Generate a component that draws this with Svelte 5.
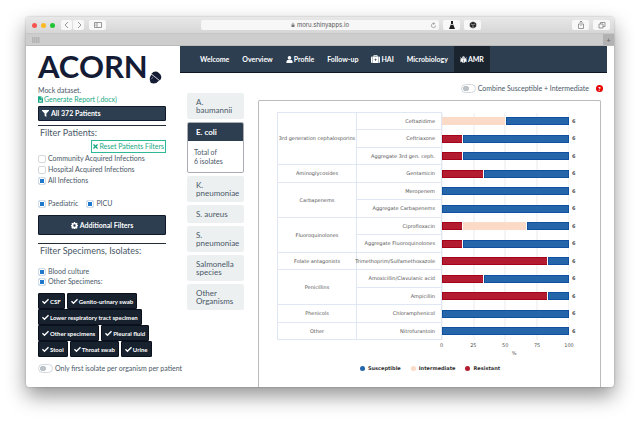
<script>
  const nav = [
    { label: 'Welcome' },
    { label: 'Overview' },
    { label: 'Profile', icon: 'user' },
    { label: 'Follow-up' },
    { label: 'HAI', icon: 'case' },
    { label: 'Microbiology' },
    { label: 'AMR', icon: 'bug', active: true }
  ];

  const icons = {
    user: { box: '0 0 16 16', d: 'M8 0a4 4 0 0 1 4 4.500a4 4 0 0 1-8 0A4 4 0 0 1 8 0zM1 16v-3c0-2.500 2-4 4-4h6c2 0 4 1.500 4 4v3z' },
    case: { box: '0 0 18 16', d: 'M5 3V1.500Q5 0 6.500 0h5Q13 0 13 1.500V3h-1.500V1.500h-5V3zM0 5q0-2 2-2h1v13H2q-2 0-2-2zM3.700 3h10.600v13H3.700zM8.400 7v2H6.500v1.200h1.900v2h1.200v-2h1.900V9H9.600V7zM15 3h1q2 0 2 2v9q0 2-2 2h-1z' },
    bug: { box: '0 0 16 16', d: 'M4.500 4a3.500 3.500 0 0 1 7 0zM3 5h10l2-2 1 1-2.500 2.500V8H16v2h-2.500v1l2.500 2.500-1 1-2.500-2Q11 15.500 8.500 16V8h-1v8Q5 15.500 3.500 12.500l-2.500 2-1-1L2.500 11v-1H0V8h2.500V6.500L0 4l1-1z' },
    file: { box: '0 0 12 16', d: 'M0 0h7v5h5v11H0zM8 0l4 4H8zM3 8v5h6V8H8v3L6 9l-2 2V8z' },
    filter: { box: '0 0 16 16', d: 'M0 0h16v1.500L10 8v8l-4-3V8L0 1.500z' },
    times: { box: '0 0 16 16', d: 'M3 0l5 5 5-5 3 3-5 5 5 5-3 3-5-5-5 5-3-3 5-5-5-5z' },
    check: { box: '0 0 16 16', d: 'M0 8.500L2.200 6.300 5.600 9.700 13.800 1.800 16 4 5.600 14z' },
    cog: { box: '0 0 16 16', d: 'M6.500 0h3l.4 2.200 1.300.600 2-1.200 2 2.200-1.100 1.900.5 1.200L16 7.400v2l-1.600.7-.5 1.200 1.100 2-2 2-2-1.100-1.200.5L9.500 16h-3l-.5-1.400-1.300-.5-2 1.200-2-2.100 1.100-1.900-.4-1.200L0 9.400v-2L1.500 7 2 5.700.8 3.800l2-2.200 2 1.200L6.100 2.200zM8 5.200a2.800 2.800 0 1 0 0 5.600a2.800 2.800 0 1 0 0-5.600z' }
  };

  const organisms = ['K. pneumoniae', 'S. aureus', 'S. pneumoniae', 'Salmonella species', 'Other Organisms'];
  const specimens = [
    ['CSF', 'Genito-urinary swab'],
    ['Lower respiratory tract specimen'],
    ['Other specimens', 'Pleural fluid'],
    ['Stool', 'Throat swab', 'Urine']
  ];

  // resistant and intermediate isolates out of the total of six
  const groups = [
    { name: '3rd generation cephalosporins', drugs: [['Ceftazidime', 0, 3], ['Ceftriaxone', 1, 0], ['Aggregate 3rd gen. ceph.', 1, 0]] },
    { name: 'Aminoglycosides', drugs: [['Gentamicin', 2, 0]] },
    { name: 'Carbapenems', drugs: [['Meropenem', 0, 0], ['Aggregate Carbapenems', 0, 0]] },
    { name: 'Fluoroquinolones', drugs: [['Ciprofloxacin', 1, 3], ['Aggregate Fluoroquinolones', 1, 0]] },
    { name: 'Folate antagonists', drugs: [['Trimethoprim/Sulfamethoxazole', 5, 0]] },
    { name: 'Penicillins', drugs: [['Amoxicillin/Clavulanic acid', 2, 0], ['Ampicillin', 5, 0]] },
    { name: 'Phenicols', drugs: [['Chloramphenicol', 0, 0]] },
    { name: 'Other', drugs: [['Nitrofurantoin', 0, 0]] }
  ];
  const total = 6;
  const rows = groups.flatMap((g) =>
    g.drugs.map(([drug, r, i], n) => ({
      drug,
      group: n === 0 ? g.name : null,
      span: g.drugs.length,
      parts: [['res', r], ['int', i], ['sus', total - r - i]].filter((p) => p[1] > 0)
    }))
  );
</script>

{#snippet icon(name)}
  <svg class="icon {name}" viewBox={icons[name].box} aria-hidden="true"><path d={icons[name].d} fill="currentColor" fill-rule="evenodd" /></svg>
{/snippet}

<div class="desktop">
<div class="window">
  <header class="toolbar">
    <div class="left">
      <i class="dot red"></i><i class="dot amber"></i><i class="dot green"></i>
      <div class="pair">
        <button class="tool" aria-label="Back"><svg viewBox="0 0 12 10"><path d="M7 2L4 5l3 3" /></svg></button>
        <button class="tool" aria-label="Forward"><svg viewBox="0 0 12 10"><path d="M5 2l3 3-3 3" /></svg></button>
      </div>
      <button class="tool wide" aria-label="Sidebar"><svg viewBox="0 0 12 10"><path d="M2.500 2.500h7v5h-7zM5 2.500v5M3.500 4h.7M3.500 5.500h.7" /></svg></button>
    </div>
    <div class="address">
      <svg class="lock" viewBox="0 0 8 10"><path d="M1 4h6v5H1z" fill="#777" /><path d="M2.500 4V2.500a1.500 1.500 0 0 1 3 0V4" fill="none" stroke="#777" /></svg>
      <span>moru.shinyapps.io</span>
      <svg class="reload" viewBox="0 0 10 10"><path d="M8 5a3 3 0 1 1-2-2.800M4.500.7L6.700 2.300 4.700 4" fill="none" stroke="#777" stroke-width=".8" /></svg>
    </div>
    <div class="right">
      <button class="tool wide" aria-label="Flask"><svg viewBox="0 0 12 10"><path d="M5 1h2v3l2 5H3l2-5z" fill="#222" stroke="none" /><path d="M5 4.500h2" stroke="#eee" /></svg></button>
      <button class="tool wide" aria-label="Extension"><svg viewBox="0 0 12 10"><path d="M6 2l2.800 1.400v3.200L6 8 3.200 6.600V3.400z" fill="#222" stroke="#222" /><path d="M6 5.500V8M4 4l2 1 2-1" stroke="#eee" stroke-width=".6" /></svg></button>
      <span class="push"></span>
      <button class="tool wide" aria-label="Share"><svg viewBox="0 0 12 10"><path d="M5 4H3.500v4.500h5V4H7M6 6V1M4.500 2.500L6 1l1.500 1.500" /></svg></button>
      <button class="tool wide" aria-label="Tabs"><svg viewBox="0 0 12 10"><path d="M3 4h4v4H3zM4.500 4V2.500h4.500v4H7" /></svg></button>
    </div>
  </header>
  <div class="tabs">
    <svg class="grid" viewBox="0 0 8 6"><path d="M0 1h8M0 3h8M0 5h8" stroke="#999" stroke-dasharray="1.500 .5" /></svg>
    <button class="plus" aria-label="New tab">+</button>
  </div>

  <div class="page">
    <aside>
      <h1>ACORN<svg class="acorn" viewBox="0 0 26 24"><g transform="rotate(38 13 12)"><path d="M3 10Q3 0 13 0t10 10z" fill="#141c35" /><path d="M4 11h18q0 10-9 13q-9-3-9-13z" fill="#141c35" /><path d="M3 10.500h20M9 13v5" stroke="#b4bac8" stroke-width="1" fill="none" /></g></svg></h1>
      <p>Mock dataset.</p>
      <a class="report" href="#report">{@render icon('file')} Generate Report (.docx)</a>
      <button class="dark patients">{@render icon('filter')} All 372 Patients</button>
      <section class="filters">
        <h2>Filter Patients:</h2>
        <button class="reset">{@render icon('times')} Reset Patients Filters</button>
        <div class="checks">
          <label><input type="checkbox" />Community Acquired Infections</label>
          <label><input type="checkbox" />Hospital Acquired Infections</label>
          <label><input type="checkbox" checked />All Infections</label>
        </div>
        <div class="wards">
          <label><input type="checkbox" checked />Paediatric</label>
          <label><input type="checkbox" checked />PICU</label>
        </div>
        <button class="dark more">{@render icon('cog')} Additional Filters</button>
      </section>
      <section class="filters">
        <h2>Filter Specimens, Isolates:</h2>
        <div class="cultures">
          <label><input type="checkbox" checked />Blood culture</label>
          <label><input type="checkbox" checked />Other Specimens:</label>
        </div>
        <div class="tags">
          {#each specimens as line}
            <div>
              {#each line as s}<button>{@render icon('check')} {s}</button>{/each}
            </div>
          {/each}
        </div>
        <label class="switch"><input type="checkbox" role="switch" />Only first isolate per organism per patient</label>
      </section>
    </aside>

    <main>
      <nav>
        {#each nav as item}
          <a href="#{item.label}" class:active={item.active}>{#if item.icon}{@render icon(item.icon)}{/if}{item.label}</a>
        {/each}
      </nav>
      <div class="combine">
        <label class="switch"><input type="checkbox" role="switch" />Combine Susceptible + Intermediate</label>
        <button class="help" aria-label="Help">?</button>
      </div>
      <div class="body">
        <div class="organisms">
          <button>A. baumannii</button>
          <div class="selected">
            <button>E. coli</button>
            <p>Total of<br />6 isolates</p>
          </div>
          {#each organisms as o}<button>{o}</button>{/each}
        </div>
        <div class="card">
          <table>
            <colgroup><col class="c-group" /><col class="c-drug" /><col /><col class="c-count" /></colgroup>
            <tbody>
              {#each rows as row}
                <tr>
                  {#if row.group}<th rowspan={row.span} scope="rowgroup">{row.group}</th>{/if}
                  <th class="drug" scope="row"><span>{row.drug}</span></th>
                  <td class="plot">
                    <div class="bar">
                      {#each row.parts as [kind, n]}<i class={kind} style="width: {(n / total) * 100}%"></i>{/each}
                    </div>
                  </td>
                  <td class="count">{total}</td>
                </tr>
              {/each}
            </tbody>
            <tfoot>
              <tr>
                <td colspan="2"></td>
                <td>
                  <div class="axis">{#each [0, 25, 50, 75, 100] as t}<span>{t}</span>{/each}</div>
                </td>
                <td></td>
              </tr>
              <tr>
                <td colspan="2"></td>
                <td colspan="2" class="unit">%</td>
              </tr>
            </tfoot>
          </table>
          <div class="legend">
            <span><i class="sus"></i>Susceptible</span>
            <span><i class="int"></i>Intermediate</span>
            <span><i class="res"></i>Resistant</span>
          </div>
        </div>
      </div>
    </main>
  </div>
</div>
</div>

<style>
  :global(body) { background: #fff; }
  * { box-sizing: border-box; }
  .desktop { padding: 17px 26px 34px; overflow: hidden; }
  .window {
    border-radius: 3px;
    background: #fff;
    font: 7px/9px Lato, "Liberation Sans", sans-serif;
    color: #4a5868;
    box-shadow: 0 9px 20px rgba(0, 0, 0, .42), 0 0 2px rgba(0, 0, 0, .3);
  }
  h1, h2, p { margin: 0; font-weight: 400; }
  button { font: inherit; color: inherit; border: 0; padding: 0; margin: 0; }
  a { color: inherit; text-decoration: none; }
  .icon { width: 7px; height: 7px; flex: none; }

  .toolbar {
    display: grid;
    grid-template-columns: 1fr 238px 1fr;
    align-items: center;
    height: 17px;
    background: linear-gradient(#e8e8e8, #d6d6d6);
    border-bottom: 1px solid #c6c6c6;
    border-radius: 3px 3px 0 0;
  }
  .left, .right { display: flex; align-items: center; gap: 4px; padding: 0 4px; }
  .left { padding-left: 6px; }
  .dot { width: 5px; height: 5px; border-radius: 50%; }
  .red { background: #f95550; }
  .amber { background: #fdb924; }
  .green { background: #1fc534; }
  .pair { display: flex; gap: 1px; margin: 0 1px 0 2px; }
  .tool { width: 11px; height: 10px; background: #f8f8f8; border-radius: 2px; display: flex; justify-content: center; }
  .tool.wide { width: 17px; }
  .tool svg { width: 12px; height: 10px; fill: none; stroke: #808080; stroke-width: .8; flex: none; }
  .address {
    display: flex; align-items: center; justify-content: center; gap: 2px;
    height: 10px; background: #f7f7f7; border-radius: 2px;
    font: 6px/10px Inter, sans-serif; color: #555; position: relative;
  }
  .lock { width: 4px; height: 6px; }
  .reload { position: absolute; right: 2px; width: 7px; height: 7px; }
  .push { flex: 1; }
  .tabs { display: flex; align-items: center; justify-content: space-between; height: 12px; background: #cdcdcd; border-bottom: 1px solid #bbb; padding-left: 6px; }
  .grid { width: 8px; height: 6px; }
  .plus { width: 11px; height: 11px; background: #b2b2b2; color: #666; font-size: 8px; line-height: 10px; }

  .page { display: grid; grid-template-columns: 154px minmax(0, 1fr); }
  aside { padding: 2px 14px 14px 12px; white-space: nowrap; }
  h1 { display: flex; align-items: flex-end; height: 37px; color: #141c35; font: 700 31px/37px Lato, sans-serif; }
  .acorn { width: 14px; height: 14px; flex: none; }
  p { color: #4a5868; }
  h1 + p { line-height: 10px; }
  .report { display: flex; align-items: center; gap: 1px; line-height: 9px; color: #18a984; }
  .file { width: 5px; }
  .dark { display: flex; align-items: center; justify-content: center; gap: 2px; width: 100%; background: #2c3e50; color: #fff; font-weight: 700; border: 1px solid #0e1a2c; border-radius: 1px; }
  .patients { justify-content: flex-start; height: 15px; margin: 2px 0 4px; padding-left: 3px; }
  .filters { border-top: 1px solid #222b36; }
  h2 { font-size: 9px; line-height: 14px; padding-left: 2px; }
  .reset { display: flex; align-items: center; gap: 1px; height: 13px; margin-left: auto; padding: 0 1px; background: #fff; border: 1px solid #2fb897; color: #18a984; }
  .reset .icon { width: 5px; height: 5px; }
  .checks { display: grid; }
  label { display: flex; align-items: center; gap: 2px; }
  .checks label { height: 11px; }
  input { appearance: none; margin: 0; flex: none; width: 8px; height: 8px; border: 1px solid #d3d8dc; border-radius: 2px; background: #fff; }
  input:checked { background: #1f78cc; border-color: #d3dfea; box-shadow: inset 0 0 0 1px #fff; }
  .wards { display: flex; gap: 8px; height: 22px; align-items: flex-end; }
  .more { height: 20px; margin: 7px 0 8px; }
  .cultures { padding: 9px 0 7px; display: grid; gap: 1px; }
  .tags > div { display: flex; gap: 2px; }
  .tags button { display: flex; align-items: center; gap: 1px; height: 16px; padding: 0 3px; background: #18222e; color: #fff; font-size: 6px; font-weight: 700; border: 1px solid #0b111c; border-radius: 1px; }
  .tags .icon { width: 7px; height: 7px; }
  .switch input { width: 15px; height: 9px; border-radius: 5px; background: radial-gradient(circle at 4px 50%, #bcc3c8 3px, #fff 3px); }
  .switch input:checked { background: radial-gradient(circle at 9px 50%, #1d72c2 3px, #fff 3px); }
  .filters > .switch { margin-top: 7px; }

  main { display: flex; flex-direction: column; padding-right: 7px; }
  nav { display: flex; height: 27px; padding-left: 13px; background: #2c3e50; border-bottom: 1px solid #0d1622; color: #fff; font-weight: 700; }
  nav a { display: flex; align-items: center; gap: 1px; padding: 0 6px 0 7px; }
  nav .case { width: 9px; height: 8px; }
  nav .active { background: #1a242f; padding: 0 6px; }
  .combine { display: flex; align-items: center; justify-content: flex-end; gap: 7px; height: 27px; padding: 3px 4px 0 0; }
  .help { width: 7px; height: 7px; border-radius: 50%; background: #e60000; color: #fff; font-size: 6px; line-height: 7px; font-weight: 900; }
  .body { display: flex; gap: 14px; flex: 1; padding: 0 6px 0 7px; }
  .organisms { width: 57px; display: flex; flex-direction: column; gap: 3px; margin-top: -7px; font-size: 8px; line-height: 8px; }
  .organisms button { text-align: left; padding: 5px 9px; background: #ecf0f1; border-radius: 2px; color: #4a5868; }
  .selected { border: 1px solid #a9adb2; border-radius: 2px; }
  .organisms .selected button { display: block; width: 100%; padding: 5px 8px; background: #2c3e50; color: #fff; font-weight: 700; border-radius: 1px 1px 0 0; }
  .selected p { padding: 7px 6px 6px; font-size: 7px; line-height: 9px; }

  .card { flex: 1; min-width: 0; border: 1px solid #bbb; border-bottom: 0; border-radius: 2px 2px 0 0; padding: 11px 17px 0 18px; font: 5px/7px "DejaVu Sans", sans-serif; color: #555; }
  table { width: 100%; table-layout: fixed; border-collapse: collapse; }
  .c-group { width: 79px; }
  .c-drug { width: 85px; }
  .c-count { width: 14px; }
  th, td { padding: 0; font-weight: 400; }
  tbody tr { height: 17px; }
  tbody tr:nth-child(even) { height: 18px; }
  tbody th { border: 1px solid #dfe6f4; white-space: nowrap; }
  .drug span { display: flex; justify-content: flex-end; padding-right: 6px; }
  .plot { background: repeating-linear-gradient(90deg, transparent 0 calc(25% - 1px), #eaeaea calc(25% - 1px) 25%); }
  .bar { display: flex; height: 8px; }
  .bar i { border-width: 1px; border-style: solid; }
  .bar i + i { box-shadow: -1px 0 #fff; }
  .sus { background: #2565a9; border-color: #0f50a0; }
  .int { background: #fcdac8; border-color: #fcdac8; }
  .res { background: #b21b30; border-color: #a30318; }
  .count { padding-left: 3px; font-weight: 700; }
  .axis { display: flex; justify-content: space-between; padding-top: 2px; }
  .axis span { width: 0; display: flex; justify-content: center; }
  .unit { text-align: center; padding: 1px 0 0 4px; }
  .legend { display: flex; justify-content: center; gap: 10px; padding-top: 8px; font-weight: 700; color: #333; }
  .legend span { display: flex; align-items: center; gap: 3px; }
  .legend i { width: 5px; height: 5px; border-radius: 50%; }
</style>
